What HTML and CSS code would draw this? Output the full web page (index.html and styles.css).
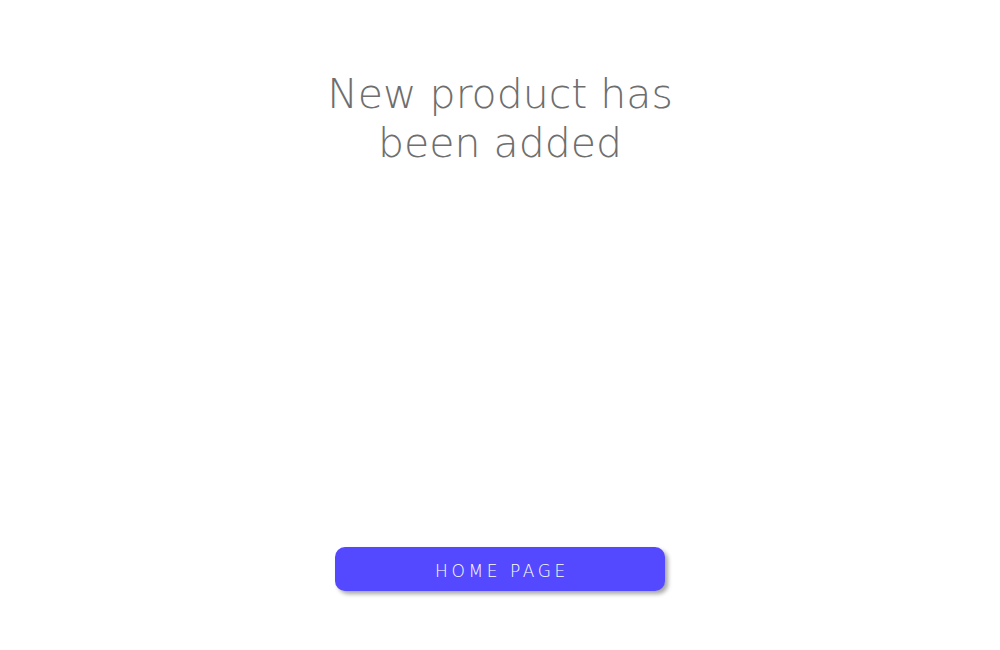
FILE: index.html
```html
<!DOCTYPE html>
<html lang="en">
<head>
<meta charset="utf-8">
<title>Product added</title>
<link rel="stylesheet" href="styles.css">
</head>
<body>
<main class="page">
  <h1 class="title">New product has<br>been added</h1>
  <button class="home-btn" type="button">HOME PAGE</button>
</main>
</body>
</html>
```
FILE: styles.css
```css
html, body {
  margin: 0;
  padding: 0;
  background: #ffffff;
}
.page {
  width: 1000px;
  height: 650px;
  display: flex;
  flex-direction: column;
  align-items: center;
  box-sizing: border-box;
  padding-top: 70px;
}
.title {
  margin: 0;
  font-family: "DejaVu Sans", sans-serif;
  font-weight: 200;
  font-size: 41px;
  line-height: 49px;
  color: #6e6e6e;
  text-align: center;
}
.home-btn {
  margin-top: 379px;
  width: 330px;
  height: 44px;
  border: none;
  border-radius: 10px;
  background: #5449ff;
  color: #ffffff;
  font-family: "DejaVu Sans", sans-serif;
  font-weight: 200;
  font-size: 17px;
  letter-spacing: 3.6px;
  box-shadow: 3px 3px 4px rgba(0, 0, 0, 0.35);
  padding: 3px 0 0 4px;
  cursor: pointer;
}
```
